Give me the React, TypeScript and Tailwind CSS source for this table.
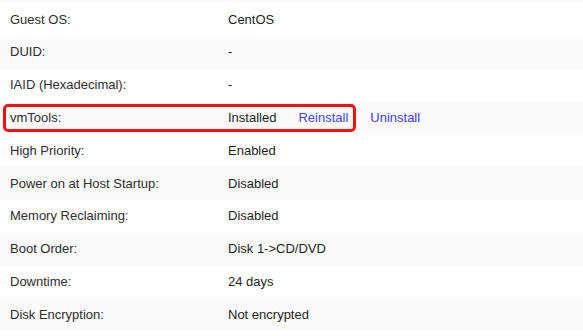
import React from "react";

const rows: { label: string; value: React.ReactNode; highlight?: boolean }[] = [
  { label: "Guest OS:", value: "CentOS" },
  { label: "DUID:", value: "-" },
  { label: "IAID (Hexadecimal):", value: "-" },
  { label: "vmTools:", value: null, highlight: true },
  { label: "High Priority:", value: "Enabled" },
  { label: "Power on at Host Startup:", value: "Disabled" },
  { label: "Memory Reclaiming:", value: "Disabled" },
  { label: "Boot Order:", value: "Disk 1->CD/DVD" },
  { label: "Downtime:", value: "24 days" },
  { label: "Disk Encryption:", value: "Not encrypted" },
];

export default function App() {
  return (
    <div
      className="w-[583px] h-[336px] overflow-hidden bg-white text-[13px]"
      style={{ fontFamily: '"Liberation Sans", Arial, sans-serif' }}
    >
      <div className="h-[3px] bg-[#fafafa]" />
      {rows.map((r, i) => (
        <div
          key={r.label}
          className={`relative flex items-center h-[32.8px] ${i % 2 === 1 ? "bg-[#fafafa]" : "bg-white"}`}
        >
          <div className="w-[228px] pl-[10px] text-[#2e2e2e]">{r.label}</div>
          <div className="flex items-center text-[#1f1f1f]">
            {r.highlight ? (
              <>
                <span>Installed</span>
                <span className="ml-[22px] text-[#4646f0]">Reinstall</span>
                <span className="ml-[22px] text-[#3c3cf0]">Uninstall</span>
              </>
            ) : (
              r.value
            )}
          </div>
          {r.highlight && (
            <div className="absolute left-[3px] top-[3px] w-[353px] h-[28px] border-[3px] border-[#f51010] rounded-[5px]" />
          )}
        </div>
      ))}
    </div>
  );
}
